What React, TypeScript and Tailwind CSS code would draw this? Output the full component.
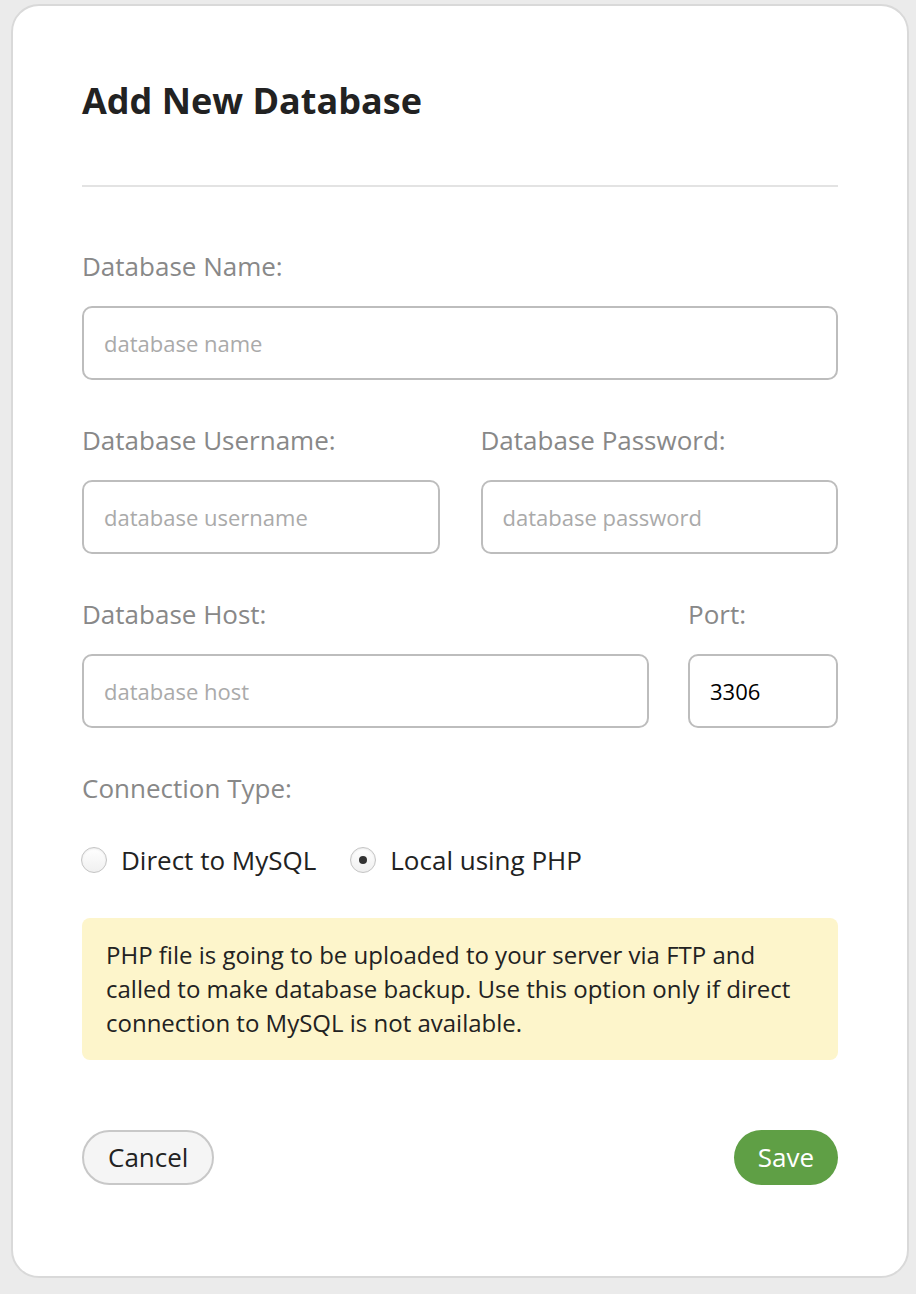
import { useState } from 'react';

const font = { fontFamily: '"Open Sans", "Noto Sans", sans-serif' };

function Field({ label, placeholder, value, className = '' }: { label: string; placeholder?: string; value?: string; className?: string }) {
    return (
        <div className={`flex flex-col ${className}`}>
            <label className="text-[26px] leading-[30px] text-[#888888]">{label}</label>
            <input
                defaultValue={value}
                placeholder={placeholder}
                className="mt-[25px] h-[74px] w-full rounded-[10px] border-2 border-[#bdbdbd] bg-white px-[20px] text-[22px] text-black outline-none placeholder:text-[#aaaaaa]"
                style={font}
            />
        </div>
    );
}

function Radio({ checked, label, onClick }: { checked: boolean; label: string; onClick: () => void }) {
    return (
        <button type="button" onClick={onClick} className="flex items-center gap-[14px]">
            <span className="flex h-[26px] w-[26px] items-center justify-center rounded-full border border-[#c4c4c4] bg-gradient-to-b from-white to-[#f0f0f0] shadow-[inset_0_1px_2px_rgba(0,0,0,0.08)]">
                {checked && <span className="h-[8px] w-[8px] rounded-full bg-[#333333]" />}
            </span>
            <span className="text-[26px] leading-[30px] text-[#222222]">{label}</span>
        </button>
    );
}

export default function App() {
    const [mode, setMode] = useState<'direct' | 'php'>('php');

    return (
        <div className="min-h-[1294px] bg-[#ebebeb] pt-[4px] pl-[11px]" style={font}>
            <div className="w-[898px] rounded-[28px] border-2 border-[#d9d9d9] bg-white px-[69px] pt-[75px] pb-[91px]">
                {/* Header */}
                <h1 className="text-[36px] font-bold leading-[40px] text-[#222222]">Add New Database</h1>
                <div className="mt-[64px] h-[2px] bg-[#e3e3e3]" />

                {/* Form */}
                <div className="mt-[64px] flex flex-col gap-[45px]">
                    <Field label="Database Name:" placeholder="database name" />
                    <div className="grid grid-cols-2 gap-[41px]">
                        <Field label="Database Username:" placeholder="database username" />
                        <Field label="Database Password:" placeholder="database password" />
                    </div>
                    <div className="flex gap-[39px]">
                        <Field label="Database Host:" placeholder="database host" className="flex-1" />
                        <Field label="Port:" value="3306" className="w-[150px]" />
                    </div>
                    <div className="flex flex-col">
                        <span className="text-[26px] leading-[30px] text-[#888888]">Connection Type:</span>
                        <div className="mt-[42px] flex items-center gap-[34px] -ml-[1px]">
                            <Radio checked={mode === 'direct'} label="Direct to MySQL" onClick={() => setMode('direct')} />
                            <Radio checked={mode === 'php'} label="Local using PHP" onClick={() => setMode('php')} />
                        </div>
                    </div>
                </div>

                {/* Note */}
                <div className="mt-[43px] rounded-[8px] bg-[#fdf5cb] px-[24px] pt-[20px] pb-[20px] text-[24px] leading-[34px] text-[#222222]">
                    PHP file is going to be uploaded to your server via FTP and called to make database backup. Use this option only if direct connection to MySQL is not available.
                </div>

                {/* Actions */}
                <div className="mt-[70px] flex items-center justify-between">
                    <button className="h-[55px] rounded-full border-2 border-[#c8c8c8] bg-[#f5f5f5] px-[24px] text-[26px] text-[#222222]">Cancel</button>
                    <button className="h-[55px] rounded-full bg-[#5f9f45] px-[24px] text-[26px] text-white">Save</button>
                </div>
            </div>
        </div>
    );
}
